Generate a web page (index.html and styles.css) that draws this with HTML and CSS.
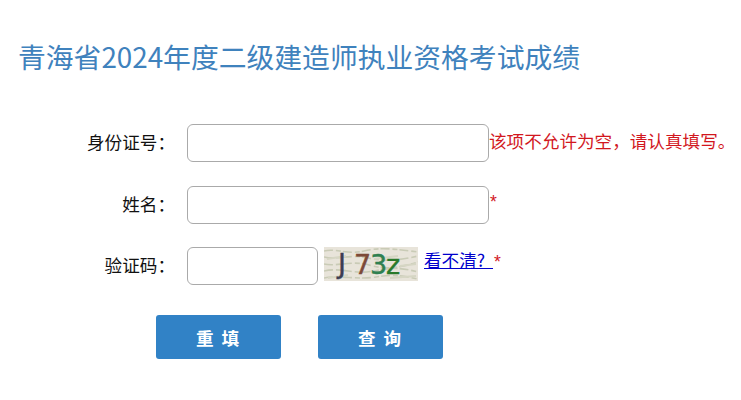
FILE: index.html
```html
<!doctype html>
<html lang="zh">
<head>
	<meta charset="utf-8">
	<title>青海省2024年度二级建造师执业资格考试成绩</title>
	<link rel="stylesheet" href="styles.css">
</head>
<body>
	<h1 class="title">青海省2024年度二级建造师执业资格考试成绩</h1>

	<form class="form">
		<div class="row">
			<label class="label">身份证号：</label>
			<input class="input" type="text">
			<span class="error">该项不允许为空，请认真填写。</span>
		</div>
		<div class="row">
			<label class="label">姓名：</label>
			<input class="input" type="text">
			<span class="star">*</span>
		</div>
		<div class="row row-code">
			<label class="label">验证码：</label>
			<input class="input input-code" type="text">
			<svg class="captcha" width="94" height="34" viewBox="0 0 94 34">
				<rect width="94" height="34" fill="#e8e4da"/>
				<path d="M0 4 C12 1 24 8 40 4 S72 2 94 5 M0 10 C14 13 26 7 44 11 S76 13 94 9 M0 17 C12 20 28 13 45 18 S75 21 94 15 M0 24 C18 20 30 28 50 24 S78 21 94 25 M0 31 C16 28 34 33 52 30 S80 29 94 32" stroke="#c9cbb6" stroke-width="1.6" stroke-dasharray="9 3 5 2" fill="none"/>
				<path d="M4 31 L24 28 M50 12 L74 9 M66 31 L92 29 M76 19 L92 17 M3 12 L22 9" stroke="#d6d6c4" stroke-width="2" fill="none"/>
				<text class="captcha-char" x="14" y="26" fill="#3c3c52" stroke="#3c3c52">J</text>
				<text class="captcha-char" x="30" y="27" fill="#7d4a38" stroke="#7d4a38">7</text>
				<text class="captcha-char" x="46" y="27" fill="#2f8050" stroke="#2f8050">3</text>
				<text class="captcha-char" x="62" y="27" fill="#2a7a2a" stroke="#2a7a2a">z</text>
			</svg>
			<a class="refresh" href="#">看不清?  </a>
			<span class="star star-code">*</span>
		</div>
		<div class="buttons">
			<button class="btn" type="reset">重 填</button>
			<button class="btn" type="submit">查 询</button>
		</div>
	</form>
</body>
</html>
```

FILE: styles.css
```css
body {
	margin: 0;
	background: #fff;
	font-family: "Noto Sans CJK SC", "Liberation Sans", sans-serif;
}

.title {
	margin: 0;
	padding: 36px 0 0 18px;
	height: 88px;
	font-size: 27.8px;
	font-weight: normal;
	line-height: 40px;
	color: #3f82bd;
}

.row {
	display: flex;
	align-items: center;
	height: 38px;
	margin-bottom: 24px;
}

.row:nth-child(2) {
	margin-bottom: 23px;
}

.label {
	width: 187px;
	padding: 0 12px 4px 0;
	box-sizing: border-box;
	text-align: right;
	font-size: 17.6px;
	color: #111;
}

.input {
	width: 302px;
	height: 38px;
	box-sizing: border-box;
	border: 1px solid #aaa;
	border-radius: 6px;
	background: #fff;
}

.input-code {
	width: 131px;
}

.error {
	margin: -6px 0 0 0;
	font-size: 17.6px;
	color: #d2171e;
}

.star {
	margin: -6px 0 0 1px;
	font-family: "Liberation Sans", sans-serif;
	font-size: 17.6px;
	color: #d2171e;
}

.captcha {
	margin: -4px 0 0 6px;
}

.captcha-char {
	font-family: "DejaVu Sans", sans-serif;
	font-size: 27px;
	stroke-width: 0.4;
}

.refresh {
	margin: -14px 0 0 6px;
	font-size: 17.6px;
	color: #00c;
	white-space: pre;
}

.star-code {
	margin: -8px 0 0 1px;
}

.buttons {
	display: flex;
	gap: 37px;
	padding: 6px 0 0 156px;
}

.btn {
	width: 125px;
	height: 44px;
	border: 0;
	border-radius: 3px;
	background: #3182c6;
	color: #fff;
	font-family: inherit;
	font-size: 17.6px;
	font-weight: bold;
	letter-spacing: 2px;
}
```
